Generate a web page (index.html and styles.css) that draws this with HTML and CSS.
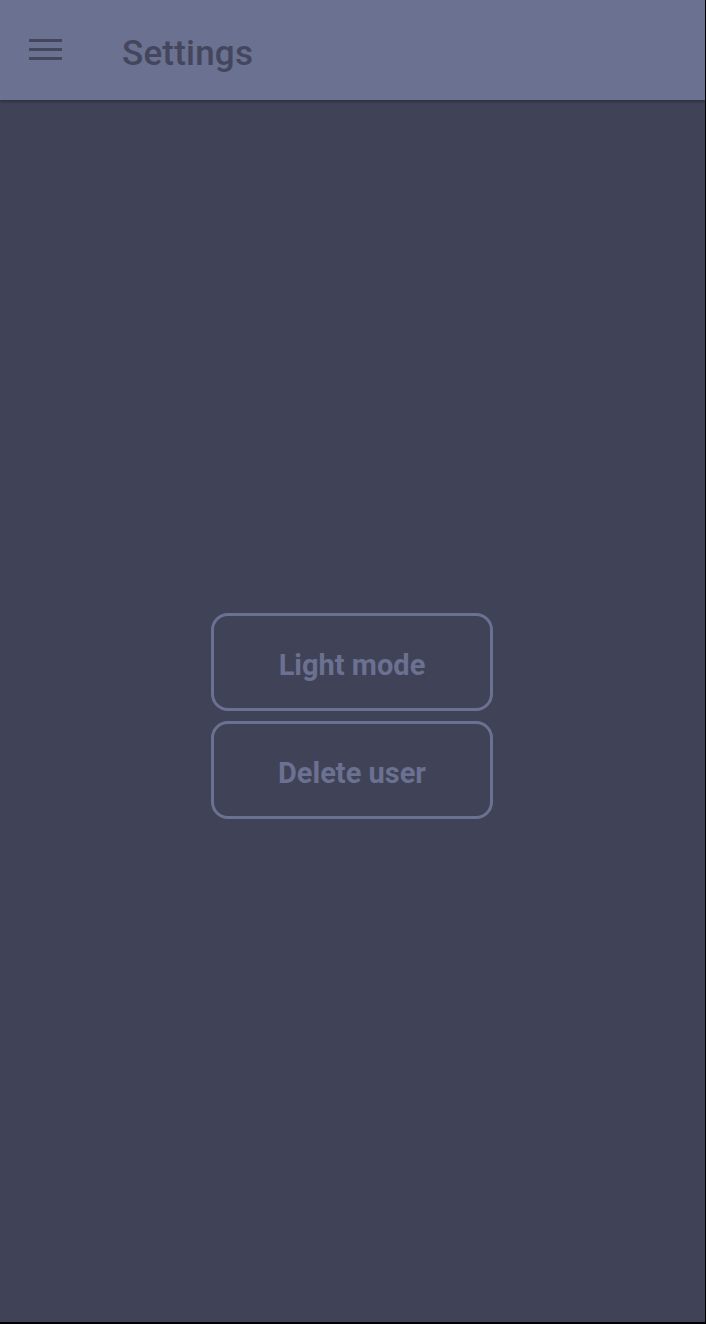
FILE: index.html
```html
<!DOCTYPE html>
<html>
<head>
<meta charset="utf-8">
<link rel="stylesheet" href="styles.css">
<title>Settings</title>
</head>
<body>
<div class="app">
  <header class="topbar">
    <button class="menu-btn" aria-label="Menu">
      <svg width="34" height="24" viewBox="0 0 34 24"><rect x="0" y="2" width="33" height="3" fill="#43465c"/><rect x="0" y="11" width="33" height="3" fill="#43465c"/><rect x="0" y="20" width="33" height="3" fill="#43465c"/></svg>
    </button>
    <h1 class="title">Settings</h1>
  </header>
  <main class="content">
    <div class="actions">
      <button class="outline-btn">Light mode</button>
      <button class="outline-btn">Delete user</button>
    </div>
  </main>
</div>
</body>
</html>
```
FILE: styles.css
```css
html, body {
  margin: 0;
  padding: 0;
  background: #000;
  height: 100%;
}
body {
  font-family: Roboto, "Noto Sans", sans-serif;
}
.app {
  width: 705px;
  height: 1322px;
  background: #404257;
  display: flex;
  flex-direction: column;
}
.topbar {
  height: 100px;
  flex: 0 0 100px;
  background: #6b7190;
  display: flex;
  align-items: center;
  box-shadow: 0 2px 2px rgba(0,0,0,0.25);
  position: relative;
  z-index: 1;
}
.menu-btn {
  background: none;
  border: 0;
  padding: 0;
  margin-left: 29px;
  width: 34px;
  height: 24px;
  display: flex;
  margin-top: -2px;
}
.title {
  margin: 7px 0 0 59px;
  font-size: 35px;
  font-weight: 500;
  color: #43465c;
  letter-spacing: 0.2px;
}
.content {
  flex: 1;
  display: flex;
  align-items: center;
  justify-content: center;
  padding-right: 1px;
}
.actions {
  display: flex;
  flex-direction: column;
  gap: 10px;
  margin-top: 10px;
}
.outline-btn {
  width: 282px;
  height: 98px;
  box-sizing: border-box;
  background: transparent;
  border: 3px solid #6b7190;
  border-radius: 17px;
  color: #6b7190;
  font-family: Roboto, "Noto Sans", sans-serif;
  font-size: 29px;
  font-weight: 700;
  padding: 5px 0 0;
}
```
